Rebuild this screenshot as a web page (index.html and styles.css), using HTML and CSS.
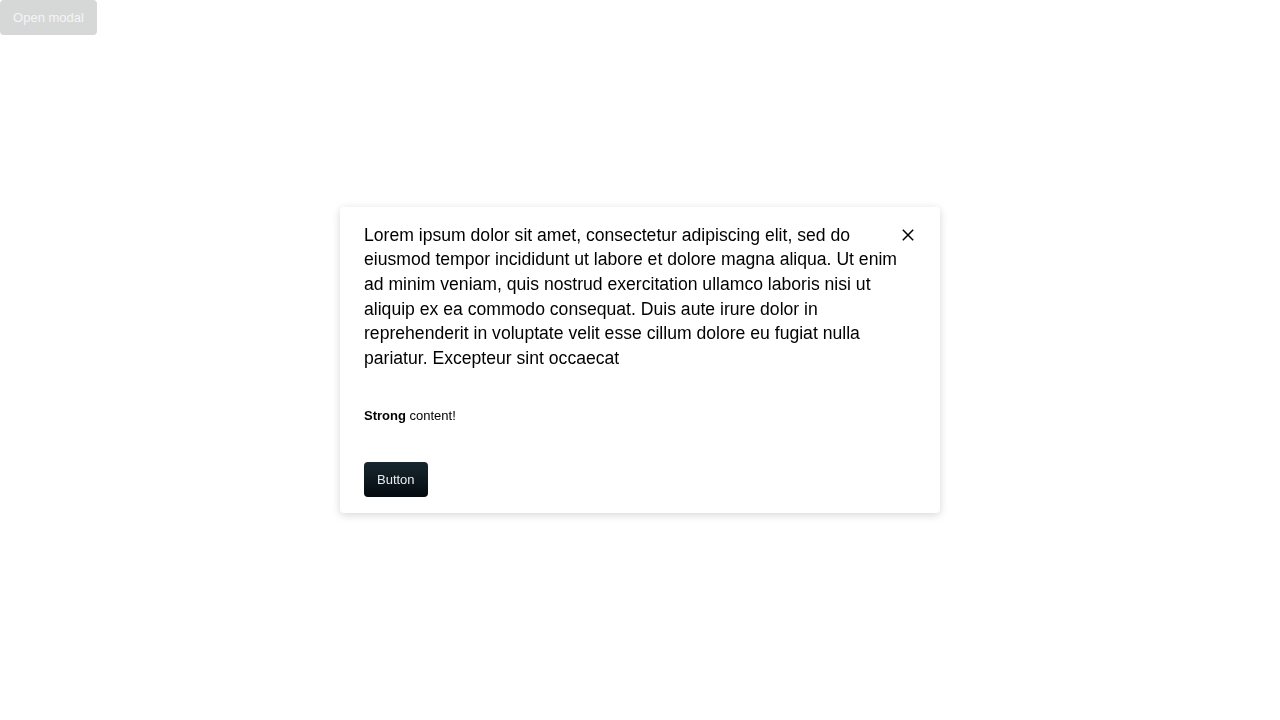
FILE: index.html
```html
<!DOCTYPE html>
<html>
<head>
<meta charset="utf-8">
<link rel="stylesheet" href="styles.css">
</head>
<body>
<button class="open-btn" disabled>Open modal</button>
<div class="overlay">
  <div class="modal">
    <div class="modal-head">
      <p class="lead">Lorem ipsum dolor sit amet, consectetur adipiscing elit, sed do eiusmod tempor incididunt ut labore et dolore magna aliqua. Ut enim ad minim veniam, quis nostrud exercitation ullamco laboris nisi ut aliquip ex ea commodo consequat. Duis aute irure dolor in reprehenderit in voluptate velit esse cillum dolore eu fugiat nulla pariatur. Excepteur sint occaecat</p>
      <button class="close" aria-label="Close">
        <svg width="12" height="12" viewBox="0 0 12 12"><path d="M0.8 0.8L11.2 11.2M11.2 0.8L0.8 11.2" stroke="#000" stroke-width="1.5" fill="none"/></svg>
      </button>
    </div>
    <p class="note"><strong>Strong</strong> content!</p>
    <div class="actions"><button class="primary">Button</button></div>
  </div>
</div>
</body>
</html>
```
FILE: styles.css
```css
html, body {
  margin: 0;
  padding: 0;
  background: #fff;
  font-family: "Liberation Sans", Arial, sans-serif;
}
.open-btn {
  display: block;
  width: 97px;
  height: 35px;
  margin: 0;
  border: 0;
  border-radius: 4px;
  background: #d6d8d8;
  color: #f4f5f5;
  font-family: "Liberation Sans", Arial, sans-serif;
  font-size: 13px;
  padding: 0;
}
.overlay {
  position: fixed;
  inset: 0;
  display: flex;
  align-items: center;
  justify-content: center;
}
.modal {
  width: 600px;
  box-sizing: border-box;
  padding: 16px 24px;
  background: #fff;
  border-radius: 4px;
  box-shadow: 0 2px 8px rgba(0,0,0,0.16);
}
.modal-head {
  display: flex;
  align-items: flex-start;
}
.lead {
  margin: 0;
  flex: 1;
  font-size: 17.6px;
  line-height: 24.6px;
  color: #000;
}
.close {
  flex: none;
  border: 0;
  background: none;
  padding: 0;
  width: 16px;
  height: 24.6px;
  display: flex;
  align-items: center;
  justify-content: center;
  cursor: pointer;
}
.note {
  margin: 37px 0 0;
  font-size: 13px;
  line-height: 18px;
  color: #000;
}
.actions {
  margin-top: 37px;
}
.primary {
  height: 35px;
  padding: 0 13px;
  border: 0;
  border-radius: 4px;
  background: linear-gradient(#182830, #050b0e);
  color: #e8ecee;
  font-family: "Liberation Sans", Arial, sans-serif;
  font-size: 13px;
}
```
